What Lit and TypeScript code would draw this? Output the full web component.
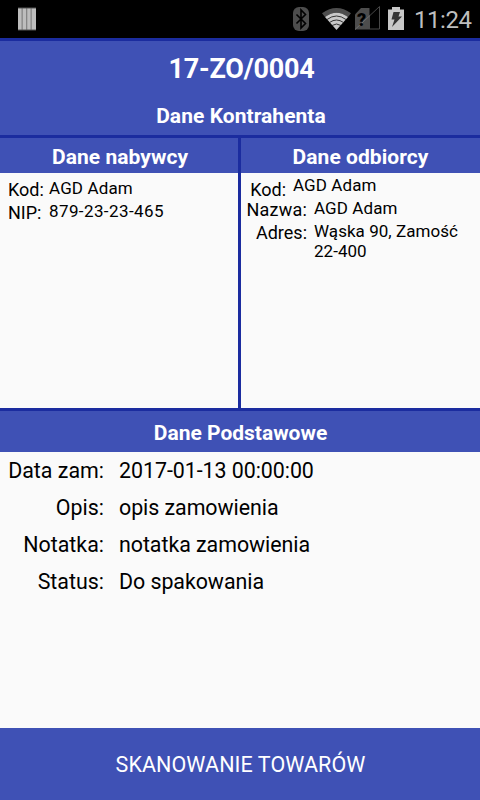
import { LitElement, html, css, svg } from "lit";
import { customElement } from "lit/decorators.js";

@customElement("status-bar")
class StatusBar extends LitElement {
  static styles = css`
    :host { display: block; height: 38px; background: #000; }
    svg { display: block; }
    .clock { font: 24px Roboto, sans-serif; fill: #bebebe; }
    .q { font: 900 18px Roboto, sans-serif; fill: #000; }
  `;
  render() {
    return html`<svg width="480" height="38" viewBox="0 0 480 38">
      <rect x="18" y="8" width="18" height="22" fill="#bdbdbd" />
      ${[21.5, 26, 30.5].map((x) => svg`<rect x=${x} y="8" width="1.3" height="22" fill="#858585" />`)}
      <path d="M18 8h18M18 30h18" stroke="#555" />
      <rect x="293" y="7" width="16" height="24" rx="6" fill="#4d4d4d" />
      <path d="M296.500 14.500l9 9-4.500 4.500V10l4.500 4.500-9 9" fill="none" stroke="#000" stroke-width="1.6" />
      <path d="M322 13.200Q336.500 2.800 351 13.200L348 17Q336.500 8.500 325 17Z" fill="#4d4d4d" />
      <path d="M325 17Q336.500 8.500 348 17L336.500 30Z" fill="#c8c8c8" />
      <path d="M327 19.500Q336.500 12.500 346 19.500M329.500 22.500Q336.500 17.500 343.500 22.500M332 25.500Q336.500 22.500 341 25.500" fill="none" stroke="#222" stroke-width=".9" />
      <path d="M355 14.500L361 8h8.500v8.500L356.500 29H355Z" fill="#4d4d4d" />
      <path d="M355 29.500L370 15.500V29.500Z" fill="#4d4d4d" />
      <path d="M355 29.500L379.500 6.500V29H370" stroke="#484848" fill="none" stroke-width="1" />
      <path d="M355 29.500L370 15.500" stroke="#707070" fill="none" stroke-width="1" />
      <text class="q" x="357" y="26">?</text>
      <path d="M388 9.500h4V7h8v2.500h4V30H388Z" fill="#c8c8c8" />
      <path d="M393.500 12h6.500l-1.500 4.500h3.500l-10 10.500 2.500-7.500h-3Z" fill="#333" />
      <text class="clock" x="414" y="28" textLength="58">11:24</text>
    </svg>`;
  }
}

@customElement("app-root")
class AppRoot extends LitElement {
  static styles = css`
    :host {
      display: flex; flex-direction: column; box-sizing: border-box;
      width: 480px; height: 800px; overflow: hidden;
      background: #fafafa; color: #000; font-family: Roboto, sans-serif;
    }
    * { box-sizing: border-box; }
    .bar { background: #3f51b5; color: #fff; font-weight: 700; text-align: center; white-space: nowrap; }
    .top { height: 97px; border-top: 3px solid #1b2c9f; }
    .title { font-size: 27px; line-height: 32px; padding-top: 12px; padding-left: 3px; letter-spacing: -.25px; }
    .sub { font-size: 21px; line-height: 26px; padding-top: 18px; padding-left: 2px; letter-spacing: .05px; }
    .parties { display: grid; grid-template-columns: 238px 239px; gap: 3px; height: 276px; background: #1b2c9f; border: solid #1b2c9f; border-width: 3px 0; }
    .party { background: #fafafa; }
    .party .bar { height: 35px; font-size: 21px; line-height: 38px; padding-left: 2px; letter-spacing: .05px; }
    .party:last-child .bar { padding-left: 0; }
    .row { display: flex; line-height: 19px; white-space: pre-line; }
    .label { font-size: 18px; flex: none; }
    .value { font-size: 17px; letter-spacing: .14px; }
    .left { padding: 6px 0 0 8px; }
    .left .label { width: 41px; padding-top: 1px; height: 23px; }
    .left .row:last-child .value { letter-spacing: .4px; }
    .right { padding-top: 3px; }
    .right .label { width: 66px; text-align: right; padding-top: 1px; height: 23px; }
    .right .value { padding-left: 7px; letter-spacing: .1px; }
    .right .row:first-child .label { width: 45px; padding-top: 4px; }
    .right .row:nth-child(2) .label { letter-spacing: .2px; }
    .right .row:last-child { line-height: 20px; }
    .right .row:last-child .value { margin-top: -1px; letter-spacing: .04px; }
    .basic { height: 41px; font-size: 21px; line-height: 44px; padding-left: 1px; }
    .details { flex: 1; font-size: 21.4px; }
    .details .row { line-height: 37px; }
    .details .key { width: 104px; text-align: right; margin-right: 15px; }
    .details .val { letter-spacing: -.05px; }
    .scan { height: 72px; border: 0; padding: 1px 0 1px 1px; background: #3f51b5; color: #fff; font: 21.5px Roboto, sans-serif; letter-spacing: .08px; }
  `;
  row(label: string, value: string) {
    return html`<div class="row"><span class="label">${label}</span><span class="value">${value}</span></div>`;
  }
  render() {
    const details = [
      ["Data zam:", "2017-01-13 00:00:00"],
      ["Opis:", "opis zamowienia"],
      ["Notatka:", "notatka zamowienia"],
      ["Status:", "Do spakowania"],
    ];
    return html`
      <status-bar></status-bar>
      <div class="bar top">
        <div class="title">17-ZO/0004</div>
        <div class="sub">Dane Kontrahenta</div>
      </div>
      <div class="parties">
        <section class="party">
          <div class="bar">Dane nabywcy</div>
          <div class="left">${this.row("Kod:", "AGD Adam")}${this.row("NIP:", "879-23-23-465")}</div>
        </section>
        <section class="party">
          <div class="bar">Dane odbiorcy</div>
          <div class="right">
            ${this.row("Kod:", "AGD Adam")}${this.row("Nazwa:", "AGD Adam")}${this.row("Adres:", "Wąska 90, Zamość\n22-400")}
          </div>
        </section>
      </div>
      <div class="bar basic">Dane Podstawowe</div>
      <div class="details">
        ${details.map(([k, v]) => html`<div class="row"><span class="key">${k}</span><span class="val">${v}</span></div>`)}
      </div>
      <button class="scan">SKANOWANIE TOWARÓW</button>
    `;
  }
}
